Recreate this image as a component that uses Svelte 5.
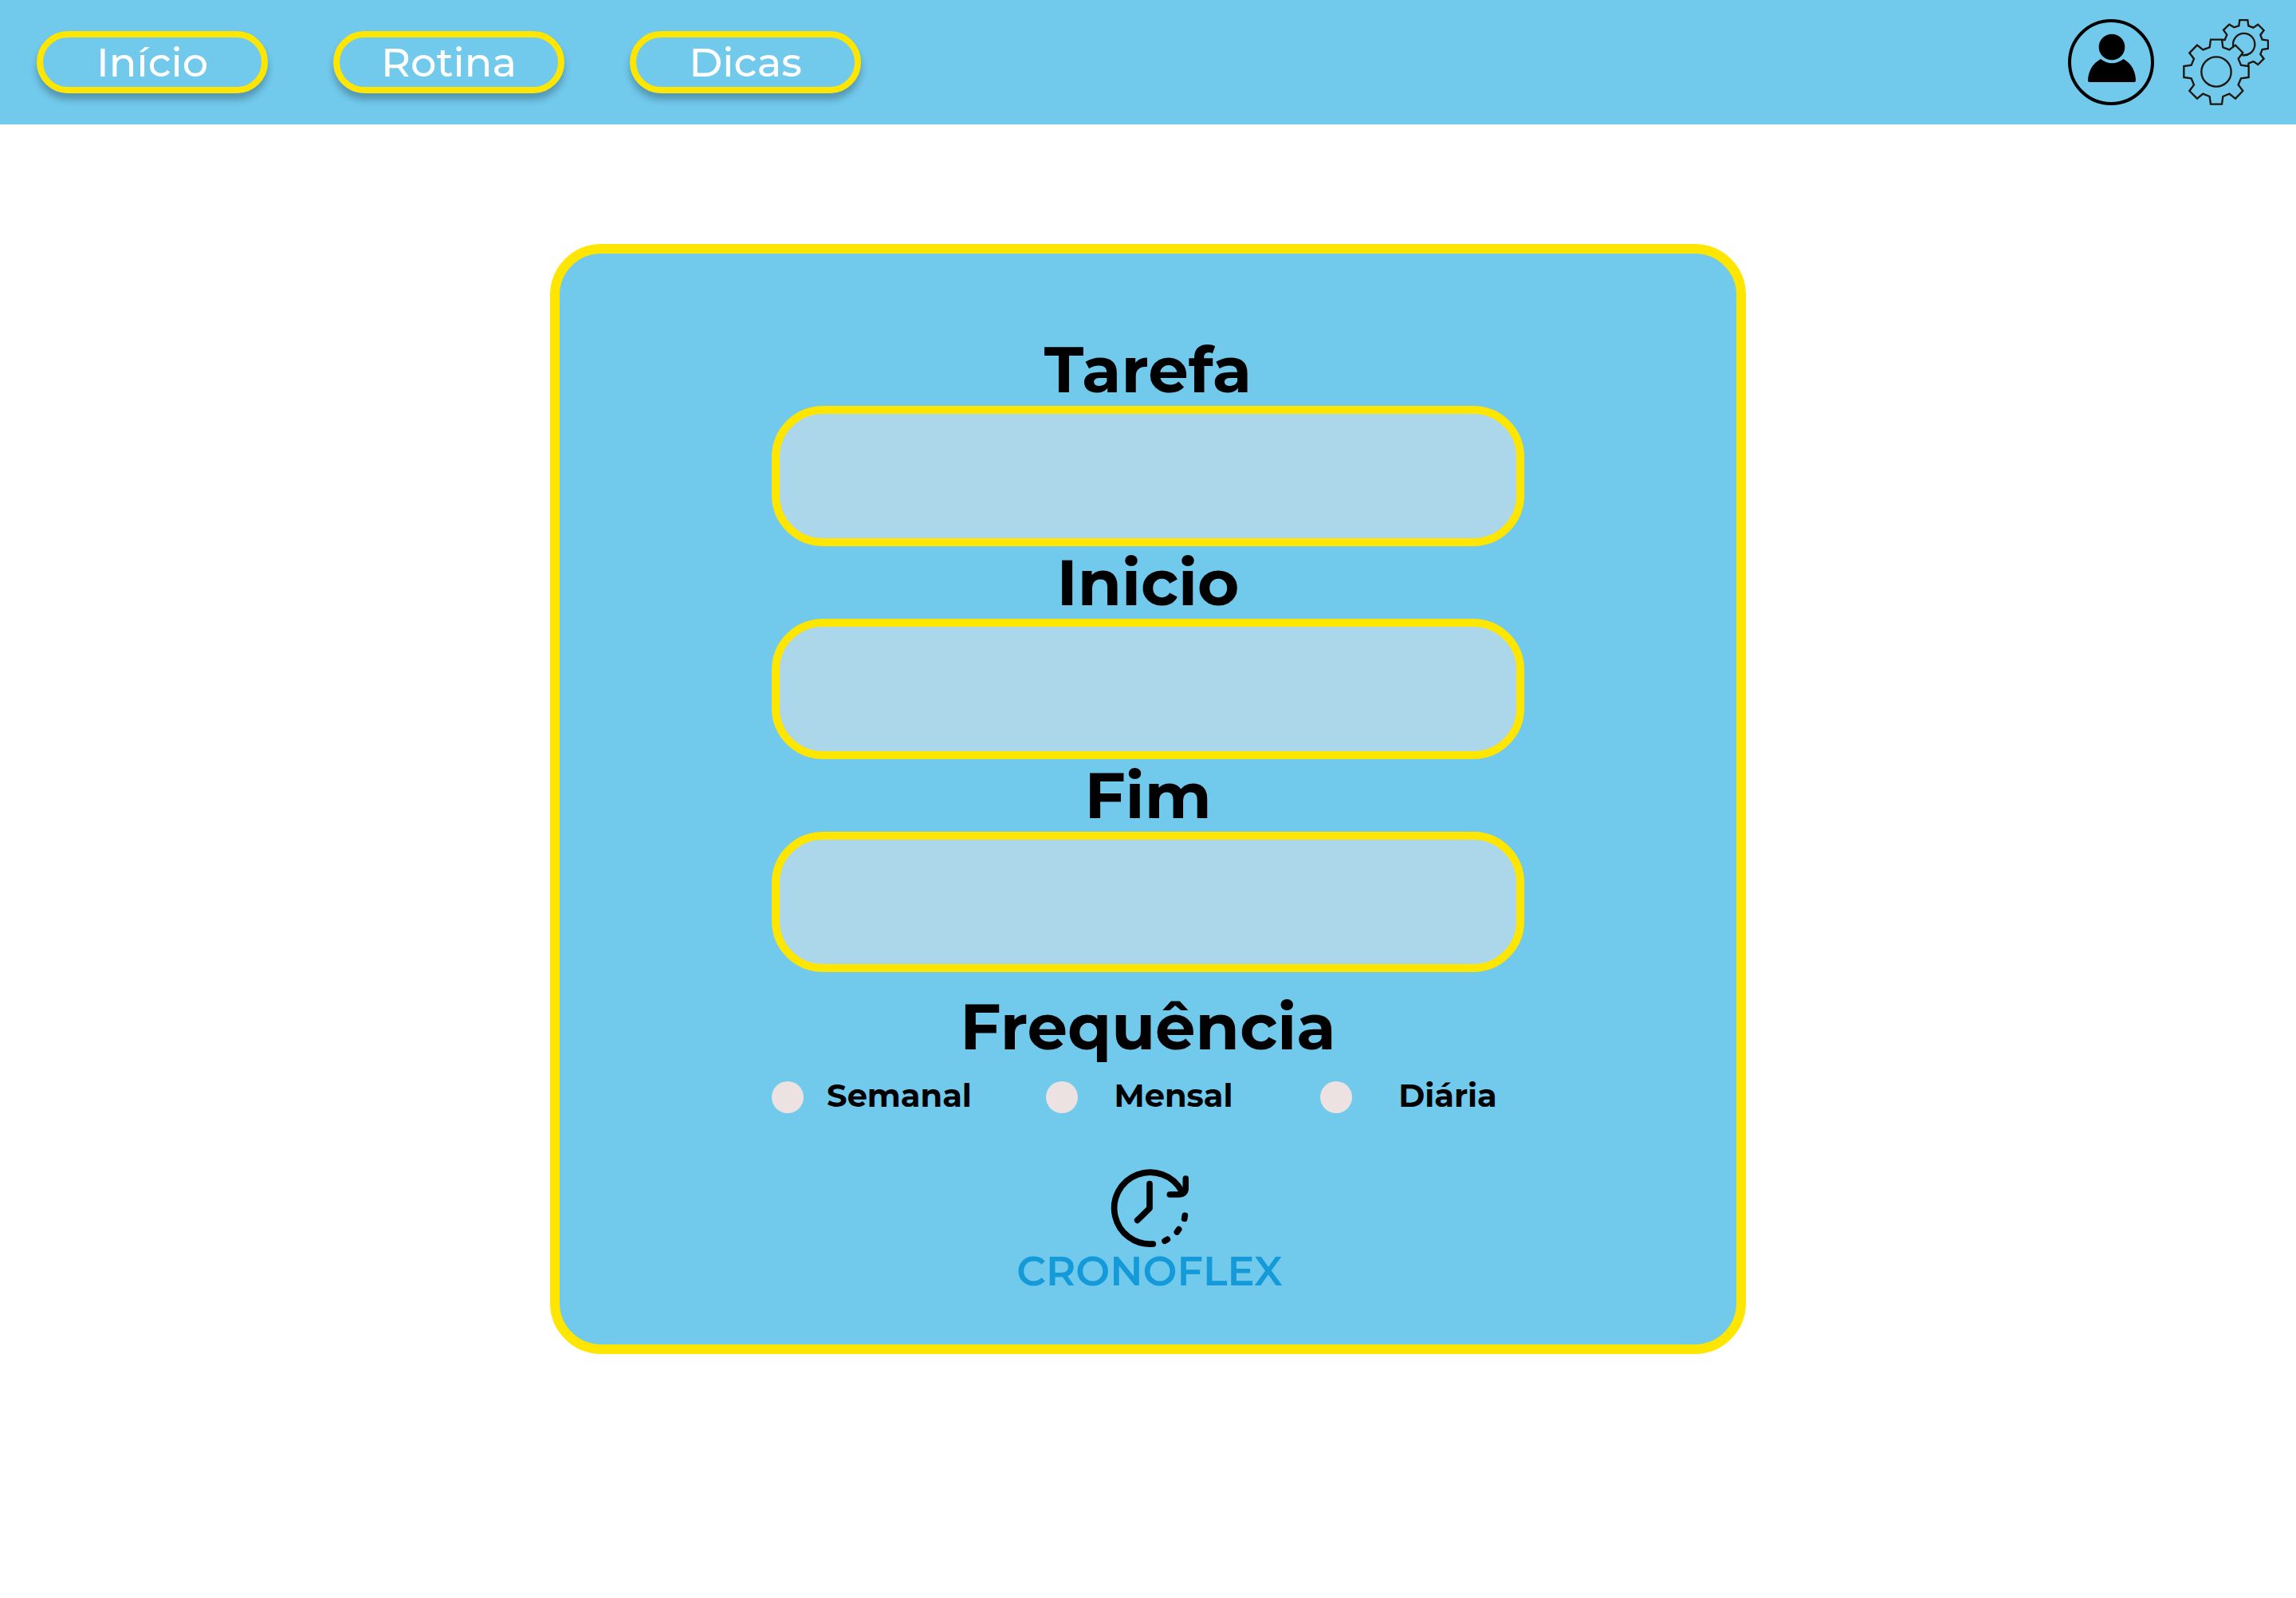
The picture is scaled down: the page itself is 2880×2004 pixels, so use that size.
<script>
  const links = [
    { label: 'Início', href: '#inicio' },
    { label: 'Rotina', href: '#rotina' },
    { label: 'Dicas', href: '#dicas' }
  ];

  const fields = [
    { id: 'tarefa', label: 'Tarefa' },
    { id: 'inicio', label: 'Inicio' },
    { id: 'fim', label: 'Fim' }
  ];

  const frequencies = [
    { value: 'semanal', label: 'Semanal' },
    { value: 'mensal', label: 'Mensal' },
    { value: 'diaria', label: 'Diária' }
  ];

  let task = $state({ tarefa: '', inicio: '', fim: '' });
  let frequency = $state('');
</script>

<header class="topbar">
  <nav class="nav">
    {#each links as link}
      <a class="pill" href={link.href}>{link.label}</a>
    {/each}
  </nav>
  <div class="actions">
    <button class="icon-button" type="button" aria-label="Perfil">
      <svg viewBox="102 72 324 324" aria-hidden="true">
        <circle cx="264" cy="234" r="156" fill="none" stroke="#000" stroke-width="12" />
        <circle cx="267" cy="177" r="49" />
        <path d="M225 222Q267 254 311 222C341 240 357 268 357 303Q357 309 351 309H183Q177 309 177 303C178 268 194 240 225 222Z" />
      </svg>
    </button>
    <button class="icon-button" type="button" aria-label="Configurações">
      <svg viewBox="534 72 324 324" fill="none" stroke="#1d160e" stroke-width="7" aria-hidden="true">
        <path d="M639 149H681L685 178L709 187L732 170L760 198L743 221L753 245L782 249V291L753 295L743 319L760 342L732 371L709 353L685 363L681 392H639L635 363L610 353L588 371L559 342L576 319L566 295L538 291V249L566 245L576 221L559 199L588 170L610 187L635 178Z" />
        <circle cx="660" cy="270" r="56" />
        <path d="M681 150H692L700 131L687 113L709 92L727 103L745 97L748 75H778L781 97L799 104L817 92L839 114L826 131L833 149L855 152V183L833 186L826 204L839 221L817 243L800 231L782 238L780 249" />
        <path d="M724 175A41 41 0 1 1 757 207" />
      </svg>
    </button>
  </div>
</header>

<main class="page">
  <form class="card">
    <div class="content">
      {#each fields as field}
        <label class="heading" for={field.id}>{field.label}</label>
        <input class="field" id={field.id} type="text" bind:value={task[field.id]} />
      {/each}

      <fieldset class="frequency">
        <legend class="heading">Frequência</legend>
        <div class="options">
          {#each frequencies as option}
            <label class="option">
              <input class="radio" type="radio" name="frequencia" value={option.value} bind:group={frequency} />
              <span class="option-label">{option.label}</span>
            </label>
          {/each}
        </div>
      </fieldset>

      <div class="brand">
        <svg class="clock" viewBox="490 78 294 294" fill="none" stroke="#000" stroke-width="23" stroke-linecap="round" stroke-linejoin="round" aria-hidden="true">
          <path d="M650 360A135 135 0 1 1 757 160" />
          <path d="M773 114V150Q772 172 748 174H713" />
          <path d="M637 134V226L591 271" />
          <path d="M770 253L768 265M747 305L740 315M704 343L694 349" />
        </svg>
        <span class="brand-name">CRONOFLEX</span>
      </div>
    </div>
  </form>
</main>

<style>
  :global(body) {
    margin: 0;
    background: #fff;
    color: #000;
    font-family: Montserrat, Inter, 'Open Sans', sans-serif;
  }

  .topbar {
    display: flex;
    align-items: center;
    justify-content: space-between;
    box-sizing: border-box;
    min-height: 156px;
    padding: 24px 34px 24px 46px;
    background: #71c9ec;
  }

  .nav {
    display: flex;
    gap: 82px;
  }

  .pill {
    box-sizing: border-box;
    width: 290px;
    border: 8px solid #ffe600;
    border-radius: 40px;
    box-shadow: 0 8px 8px rgba(0, 0, 0, 0.25);
    color: #fff;
    font-size: 51px;
    font-weight: 500;
    line-height: 62px;
    text-align: center;
    text-decoration: none;
  }

  .actions {
    display: flex;
    gap: 36px;
  }

  .icon-button {
    width: 108px;
    height: 108px;
    padding: 0;
    border: 0;
    background: none;
    cursor: pointer;
  }

  .icon-button svg {
    display: block;
    width: 100%;
    height: 100%;
  }

  .page {
    padding: 150px 48px;
  }

  .card {
    box-sizing: border-box;
    max-width: 1500px;
    margin: 0 auto;
    padding: 100px 48px 62px;
    border: 12px solid #ffe600;
    border-radius: 64px;
    background: #71c9ec;
  }

  .content {
    max-width: 944px;
    margin: 0 auto;
  }

  .heading {
    display: block;
    width: 100%;
    padding: 0;
    font-size: 80px;
    font-weight: 700;
    line-height: 91px;
    text-align: center;
  }

  .field {
    display: block;
    box-sizing: border-box;
    width: 100%;
    height: 176px;
    padding: 0 48px;
    border: 10px solid #ffe600;
    border-radius: 64px;
    background: #acd6ea;
    font: inherit;
    font-size: 51px;
  }

  .frequency {
    min-width: 0;
    margin: 23px 0 0;
    padding: 0;
    border: 0;
  }

  .options {
    display: flex;
    justify-content: space-between;
    margin-top: 23px;
  }

  .option {
    display: flex;
    align-items: flex-start;
    gap: 24px;
    width: 256px;
    cursor: pointer;
  }

  .radio {
    flex: none;
    width: 40px;
    height: 40px;
    margin: 0;
    border-radius: 50%;
    background: #ede2e2;
    appearance: none;
  }

  .radio:checked {
    background: radial-gradient(circle, #000 10px, #ede2e2 11px);
  }

  .option-label {
    flex: 1;
    font-size: 40px;
    font-weight: 700;
    line-height: 36px;
    text-align: center;
  }

  .brand {
    display: flex;
    flex-direction: column;
    align-items: center;
    margin-top: 70px;
    padding-left: 4px;
  }

  .clock {
    width: 98px;
    height: 98px;
  }

  .brand-name {
    color: #159ad9;
    font-size: 51px;
    font-weight: 600;
    line-height: 60px;
  }
</style>
